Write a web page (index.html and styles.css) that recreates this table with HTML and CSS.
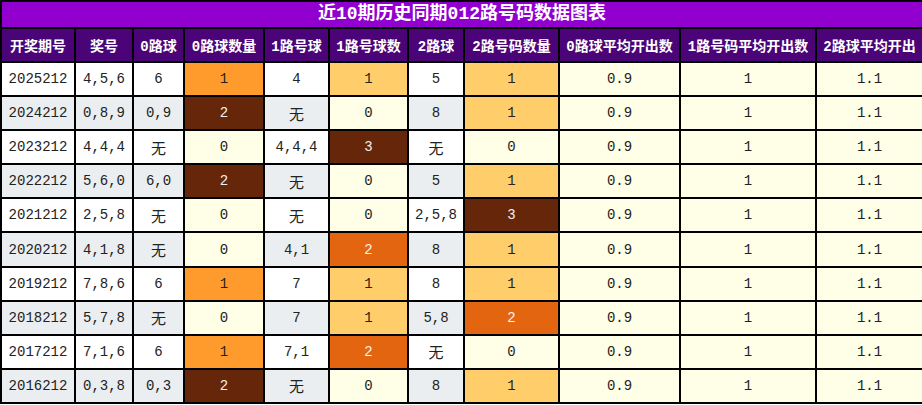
FILE: index.html
```html
<!DOCTYPE html>
<html>
<head>
<meta charset="utf-8">
<link rel="stylesheet" href="styles.css">
</head>
<body>
<table class="grid">
  <colgroup>
    <col class="w1"><col class="w2"><col class="w3"><col class="w4"><col class="w5"><col class="w6"><col class="w7"><col class="w8"><col class="w9"><col class="w10"><col class="w11">
  </colgroup>
  <thead>
    <tr class="title"><th colspan="11">近10期历史同期012路号码数据图表</th></tr>
    <tr class="head">
      <th>开奖期号</th><th>奖号</th><th>0路球</th><th>0路球数量</th><th>1路号球</th><th>1路号球数</th><th>2路球</th><th>2路号码数量</th><th>0路球平均开出数</th><th>1路号码平均开出数</th><th>2路球平均开出</th>
    </tr>
  </thead>
  <tbody>
    <tr class="odd"><td>2025212</td><td>4,5,6</td><td>6</td><td class="o1">1</td><td>4</td><td class="lo">1</td><td>5</td><td class="lo">1</td><td class="cr">0.9</td><td class="cr">1</td><td class="cr">1.1</td></tr>
    <tr class="even"><td>2024212</td><td>0,8,9</td><td>0,9</td><td class="br">2</td><td class="cn">无</td><td class="cr">0</td><td>8</td><td class="lo">1</td><td class="cr">0.9</td><td class="cr">1</td><td class="cr">1.1</td></tr>
    <tr class="odd"><td>2023212</td><td>4,4,4</td><td class="cn">无</td><td class="cr">0</td><td>4,4,4</td><td class="br">3</td><td class="cn">无</td><td class="cr">0</td><td class="cr">0.9</td><td class="cr">1</td><td class="cr">1.1</td></tr>
    <tr class="even"><td>2022212</td><td>5,6,0</td><td>6,0</td><td class="br">2</td><td class="cn">无</td><td class="cr">0</td><td>5</td><td class="lo">1</td><td class="cr">0.9</td><td class="cr">1</td><td class="cr">1.1</td></tr>
    <tr class="odd"><td>2021212</td><td>2,5,8</td><td class="cn">无</td><td class="cr">0</td><td class="cn">无</td><td class="cr">0</td><td>2,5,8</td><td class="br">3</td><td class="cr">0.9</td><td class="cr">1</td><td class="cr">1.1</td></tr>
    <tr class="even"><td>2020212</td><td>4,1,8</td><td class="cn">无</td><td class="cr">0</td><td>4,1</td><td class="do">2</td><td>8</td><td class="lo">1</td><td class="cr">0.9</td><td class="cr">1</td><td class="cr">1.1</td></tr>
    <tr class="odd"><td>2019212</td><td>7,8,6</td><td>6</td><td class="o1">1</td><td>7</td><td class="lo">1</td><td>8</td><td class="lo">1</td><td class="cr">0.9</td><td class="cr">1</td><td class="cr">1.1</td></tr>
    <tr class="even"><td>2018212</td><td>5,7,8</td><td class="cn">无</td><td class="cr">0</td><td>7</td><td class="lo">1</td><td>5,8</td><td class="do">2</td><td class="cr">0.9</td><td class="cr">1</td><td class="cr">1.1</td></tr>
    <tr class="odd"><td>2017212</td><td>7,1,6</td><td>6</td><td class="o1">1</td><td>7,1</td><td class="do">2</td><td class="cn">无</td><td class="cr">0</td><td class="cr">0.9</td><td class="cr">1</td><td class="cr">1.1</td></tr>
    <tr class="even"><td>2016212</td><td>0,3,8</td><td>0,3</td><td class="br">2</td><td class="cn">无</td><td class="cr">0</td><td>8</td><td class="lo">1</td><td class="cr">0.9</td><td class="cr">1</td><td class="cr">1.1</td></tr>
  </tbody>
</table>
</body>
</html>
```

FILE: styles.css
```css
html, body {
  margin: 0;
  padding: 0;
  background: #ffffff;
}
.grid {
  width: 922px;
  table-layout: fixed;
  border-collapse: collapse;
  font-family: "Liberation Mono", "Noto Sans CJK SC", monospace;
  font-size: 14px;
  color: #222222;
}
.w1 { width: 74px; }
.w2 { width: 58px; }
.w3 { width: 51px; }
.w4 { width: 80px; }
.w5 { width: 65px; }
.w6 { width: 79px; }
.w7 { width: 56px; }
.w8 { width: 95px; }
.w9 { width: 121px; }
.w10 { width: 136px; }
.w11 { width: 107px; }
.grid th, .grid td {
  border: 2px solid #000000;
  text-align: center;
  padding: 0;
  white-space: nowrap;
  overflow: hidden;
}
.title th {
  height: 25px;
  background: #9200d0;
  color: #ffffff;
  font-size: 18px;
  font-weight: bold;
  line-height: 25px;
}
.head th {
  height: 32px;
  background: #4a0477;
  color: #ffffff;
  font-size: 14px;
  font-weight: bold;
}
.grid td {
  height: 32.1px;
}
.odd td { background: #ffffff; }
.even td { background: #eaeef1; }
.grid td.cn { font-family: "Noto Sans CJK SC", sans-serif; font-size: 15px; }
.grid td.cr { background: #fffee6; }
.grid td.o1 { background: #ff9b2c; }
.grid td.lo { background: #ffcd6a; }
.grid td.do { background: #e4650f; color: #f4f4f4; }
.grid td.br { background: #66260a; color: #f0f0f0; }
```
